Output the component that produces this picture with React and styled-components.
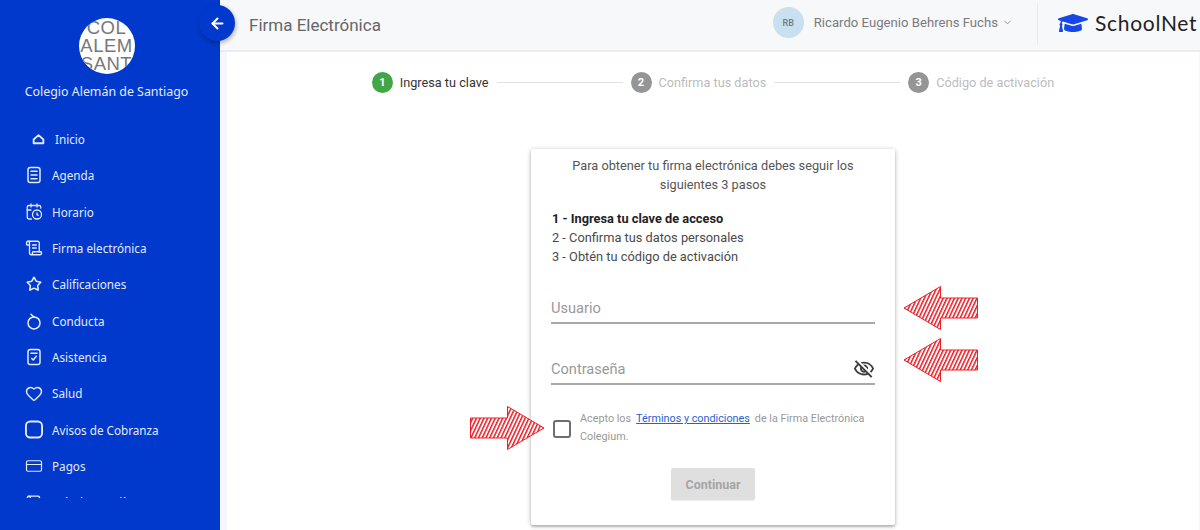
import React from "react";
import styled, { createGlobalStyle } from "styled-components";
import { ArrowLeft, ChevronDown, Star, Heart, CalendarClock, ScrollText, CreditCard } from "lucide-react";
import { FaGraduationCap } from "react-icons/fa";
import { MdOutlineVisibilityOff } from "react-icons/md";

const Global = createGlobalStyle`
  html, body { margin: 0; padding: 0; width: 1200px; height: 530px; overflow: hidden; background: #fff; }
  * { box-sizing: border-box; }
  body { font-family: Roboto, "Liberation Sans", sans-serif; }
`;

const Page = styled.div`
  display: flex;
  width: 1200px;
  height: 530px;
  overflow: hidden;
`;

const Sidebar = styled.aside`
  width: 220px;
  flex: none;
  height: 530px;
  background: #0039cb;
  display: flex;
  flex-direction: column;
  align-items: center;
  padding: 18px 7px 0 0;
  font-family: "Noto Sans", sans-serif;
  color: #e4eaff;
`;

const LogoCircle = styled.div`
  width: 56px;
  height: 56px;
  border-radius: 50%;
  background: #fff;
  overflow: hidden;
  padding-top: 1px;
  text-align: center;
  font-family: "Liberation Sans", sans-serif;
  font-size: 18.5px;
  line-height: 18px;
  letter-spacing: 0.5px;
  color: #77777c;
`;

const SchoolName = styled.div`
  margin-top: 8px;
  font-size: 12.4px;
  line-height: 20px;
  white-space: nowrap;
`;

const MenuList = styled.nav`
  align-self: stretch;
  margin-top: 19px;
  height: 377px;
  overflow: hidden;
  display: flex;
  flex-direction: column;
  align-items: flex-start;
`;

const MenuItem = styled.div`
  height: 36.3px;
  flex: none;
  display: flex;
  align-items: center;
  padding-left: ${(p) => (p.$home ? "32px" : "25px")};
  gap: ${(p) => (p.$home ? "10px" : "9px")};
  font-size: 11.7px;
  white-space: nowrap;
`;

const IconSlot = styled.span`
  width: ${(p) => (p.$home ? "13px" : "18px")};
  height: 18px;
  display: flex;
  align-items: center;
  justify-content: center;
  flex: none;
`;

const Main = styled.div`
  flex: 1;
  min-width: 0;
  position: relative;
  display: flex;
  flex-direction: column;
`;

const TopBar = styled.header`
  height: 52px;
  flex: none;
  background: #f7f8fa;
  border-bottom: 2px solid #ebecef;
  display: flex;
  align-items: flex-start;
  padding-left: 29px;
`;

const PageTitle = styled.h1`
  margin: 0;
  font-size: 17px;
  line-height: 50px;
  font-weight: 400;
  color: #666;
  white-space: nowrap;
`;

const UserArea = styled.div`
  margin-left: auto;
  height: 48px;
  display: flex;
  align-items: center;
  padding-bottom: 3px;
  color: #7b7b7f;
`;

const Avatar = styled.div`
  width: 31px;
  height: 31px;
  border-radius: 50%;
  background: #c8e0ef;
  display: flex;
  align-items: center;
  justify-content: center;
  font-size: 9px;
  font-weight: 500;
  color: #6d7b85;
`;

const UserName = styled.span`
  margin-left: 10px;
  font-size: 13.15px;
  white-space: nowrap;
`;

const Chevron = styled(ChevronDown)`
  margin-left: 4px;
  color: #8a8a8a;
`;

const Brand = styled.div`
  margin-left: 24px;
  margin-top: 3px;
  width: 163px;
  height: 42px;
  border-left: 1px solid #e9eaed;
  display: flex;
  align-items: center;
  padding-left: 20px;
  padding-bottom: 3px;
  overflow: hidden;
`;

const BrandName = styled.span`
  margin-left: 7px;
  font-family: Lato, sans-serif;
  font-size: 21px;
  letter-spacing: 0.7px;
  color: #222;
  white-space: nowrap;
`;

const Body = styled.div`
  flex: 1;
  margin: 0 1px 0 7px;
  background: #fff;
  display: flex;
  flex-direction: column;
  align-items: center;
  box-shadow: -7px 0 0 #f5f6fa, 3px 0 0 #f5f6fa;
`;

const Stepper = styled.div`
  margin-top: 20px;
  height: 21px;
  display: flex;
  align-items: center;
`;

const StepDot = styled.span`
  width: 21px;
  height: 21px;
  border-radius: 50%;
  background: ${(p) => (p.$active ? "#43a646" : "#959595")};
  color: #fff;
  font-size: 11px;
  font-weight: 700;
  display: flex;
  align-items: center;
  justify-content: center;
  flex: none;
`;

const StepLabel = styled.span`
  margin-left: 7px;
  font-size: 12.7px;
  color: ${(p) => (p.$active ? "#333" : "#bcbcbc")};
  white-space: nowrap;
`;

const StepLine = styled.span`
  width: 126px;
  height: 1px;
  margin: 0 8px;
  background: #e2e2e2;
`;

const Card = styled.section`
  position: relative;
  margin-top: 56px;
  width: 364px;
  height: 376px;
  flex: none;
  background: #fff;
  border-radius: 2px;
  box-shadow: 0 1px 5px rgba(0, 0, 0, 0.28), 0 2px 2px rgba(0, 0, 0, 0.14);
  padding: 7px 20px 0;
`;

const Intro = styled.p`
  margin: 0 auto;
  width: 310px;
  font-size: 12.75px;
  line-height: 19px;
  text-align: center;
  color: #555;
`;

const StepsList = styled.div`
  margin-top: 15px;
  padding-left: 1px;
  font-size: 12.8px;
  line-height: 19px;
  color: #4a4a4a;
`;

const StepLineText = styled.div`
  font-weight: ${(p) => (p.$strong ? 700 : 400)};
  color: ${(p) => (p.$strong ? "#222" : "#4a4a4a")};
`;

const Field = styled.div`
  height: 38px;
  margin-top: ${(p) => p.$mt}px;
  padding-top: 8px;
  border-bottom: 2px solid #a9a9a9;
  display: flex;
  align-items: center;
  justify-content: space-between;
  font-size: 14.6px;
  color: #999;
`;

const EyeOff = styled(MdOutlineVisibilityOff)`
  color: #3c3c3c;
`;

const Terms = styled.div`
  margin-top: 25px;
  display: flex;
  align-items: flex-start;
`;

const Checkbox = styled.span`
  width: 18px;
  height: 18px;
  margin: 10px 0 0 2px;
  border: 2px solid #6e6e6e;
  border-radius: 3px;
  flex: none;
`;

const TermsText = styled.div`
  margin-left: 9px;
  font-size: 10.8px;
  line-height: 18px;
  color: #999;
`;

const TermsLine = styled.div`
  display: flex;
  gap: 5px;
  white-space: nowrap;
`;

const TermsLink = styled.a`
  color: #2a5fd0;
  text-decoration: underline;
`;

const Continue = styled.button`
  display: block;
  margin: 22px auto 0;
  width: 84px;
  height: 32px;
  border: none;
  border-radius: 2px;
  background: #dfdfdf;
  color: #a5a5a5;
  font-family: inherit;
  font-size: 12.5px;
  font-weight: 700;
  box-shadow: 0 1px 1px rgba(0, 0, 0, 0.08);
`;

const BackButton = styled.button`
  position: absolute;
  left: -21px;
  top: 5px;
  width: 36px;
  height: 36px;
  padding: 0;
  border: none;
  border-radius: 50%;
  background: #0039cb;
  color: #fff;
  display: flex;
  align-items: center;
  justify-content: center;
  box-shadow: 1px 2px 4px rgba(0, 0, 0, 0.3);
`;

const ArrowSvg = styled.svg`
  position: absolute;
  left: ${(p) => p.$x}px;
  top: ${(p) => p.$y}px;
  overflow: visible;
`;

function Arrow({ x, y, flip }) {
  return (
    <ArrowSvg $x={x} $y={y} width="75" height="44" viewBox="0 0 75 44">
      <path
        d={flip
          ? "M0.5 12 H37.5 V0.5 L74 22 L37.5 43.5 V32 H0.5 Z"
          : "M74.5 12 H37.5 V0.5 L1 22 L37.5 43.5 V32 H74.5 Z"}
        fill="url(#hatch)"
        stroke="#ee1c24"
        strokeWidth="1"
      />
    </ArrowSvg>
  );
}

const i = { width: 18, height: 18, viewBox: "0 0 24 24", fill: "none", stroke: "currentColor", strokeWidth: 2, strokeLinecap: "round", strokeLinejoin: "round" };

const HomeIcon = () => (
  <svg {...i} width="13" height="13" strokeWidth="3.4"><path d="M3 12 12 4l9 8v7H3z" /></svg>
);
const AgendaIcon = () => (
  <svg {...i}><rect x="4" y="2" width="16" height="20" rx="3" /><path d="M8 7h8M8 12h8M8 17h8" /></svg>
);
const AppleIcon = () => (
  <svg {...i}><circle cx="12" cy="14.5" r="8" /><path d="M8 3l4 4M12 7V6" /></svg>
);
const AttendanceIcon = () => (
  <svg {...i}><rect x="4" y="2" width="16" height="20" rx="3" /><path d="M8 7h8M9 14l2 2 4-5" /></svg>
);
const RoundSquare = () => (
  <svg width="19" height="19" viewBox="0 0 19 19" fill="none" stroke="currentColor" strokeWidth="2"><rect x="1" y="1" width="17" height="17" rx="4.5" /></svg>
);

const menu = [
  { label: "Agenda", icon: <AgendaIcon /> },
  { label: "Horario", icon: <CalendarClock size={19} strokeWidth={1.7} /> },
  { label: "Firma electrónica", icon: <ScrollText size={18} strokeWidth={1.8} /> },
  { label: "Calificaciones", icon: <Star size={16} strokeWidth={2.4} /> },
  { label: "Conducta", icon: <AppleIcon /> },
  { label: "Asistencia", icon: <AttendanceIcon /> },
  { label: "Salud", icon: <Heart size={19} strokeWidth={1.9} /> },
  { label: "Avisos de Cobranza", icon: <RoundSquare /> },
  { label: "Pagos", icon: <CreditCard size={20} strokeWidth={1.6} /> },
  { label: "Trámites en línea", icon: <ScrollText size={17} /> },
];

export default function App() {
  return (
    <>
      <Global />
      <svg width="0" height="0" style={{ position: "absolute" }}>
        <defs>
          <pattern id="hatch" width="3.4" height="3.4" patternUnits="userSpaceOnUse" patternTransform="rotate(25)">
            <rect width="3.4" height="3.4" fill="#fff" />
            <rect width="1.5" height="3.4" fill="#ee1c24" />
          </pattern>
        </defs>
      </svg>
      <Page>
        <Sidebar>
          <LogoCircle>COL ALEM SANT</LogoCircle>
          <SchoolName>Colegio Alemán de Santiago</SchoolName>
          <MenuList>
            <MenuItem $home>
              <IconSlot $home><HomeIcon /></IconSlot>
              Inicio
            </MenuItem>
            {menu.map((m) => (
              <MenuItem key={m.label}>
                <IconSlot>{m.icon}</IconSlot>
                {m.label}
              </MenuItem>
            ))}
          </MenuList>
        </Sidebar>
        <Main>
          <BackButton aria-label="Volver"><ArrowLeft size={17} strokeWidth={2.8} /></BackButton>
          <TopBar>
            <PageTitle>Firma Electrónica</PageTitle>
            <UserArea>
              <Avatar>RB</Avatar>
              <UserName>Ricardo Eugenio Behrens Fuchs</UserName>
              <Chevron size={11} />
              <Brand>
                <FaGraduationCap size={30} color="#1747e6" />
                <BrandName>SchoolNet</BrandName>
              </Brand>
            </UserArea>
          </TopBar>
          <Body>
            <Stepper>
              <StepDot $active>1</StepDot>
              <StepLabel $active>Ingresa tu clave</StepLabel>
              <StepLine />
              <StepDot>2</StepDot>
              <StepLabel>Confirma tus datos</StepLabel>
              <StepLine />
              <StepDot>3</StepDot>
              <StepLabel>Código de activación</StepLabel>
            </Stepper>
            <Card>
              <Intro>Para obtener tu firma electrónica debes seguir los siguientes 3 pasos</Intro>
              <StepsList>
                <StepLineText $strong>1 - Ingresa tu clave de acceso</StepLineText>
                <StepLineText>2 - Confirma tus datos personales</StepLineText>
                <StepLineText>3 - Obtén tu código de activación</StepLineText>
              </StepsList>
              <Field $mt={20}>Usuario</Field>
              <Field $mt={23}>
                Contraseña
                <EyeOff size={22} />
              </Field>
              <Terms>
                <Checkbox />
                <TermsText>
                  <TermsLine>
                    <span>Acepto los</span>
                    <TermsLink>Términos y condiciones</TermsLink>
                    <span>de la Firma Electrónica</span>
                  </TermsLine>
                  <TermsLine>Colegium.</TermsLine>
                </TermsText>
              </Terms>
              <Continue>Continuar</Continue>
              <Arrow x={372} y={137} />
              <Arrow x={372} y={189} />
              <Arrow x={-61} y={257} flip />
            </Card>
          </Body>
        </Main>
      </Page>
    </>
  );
}
